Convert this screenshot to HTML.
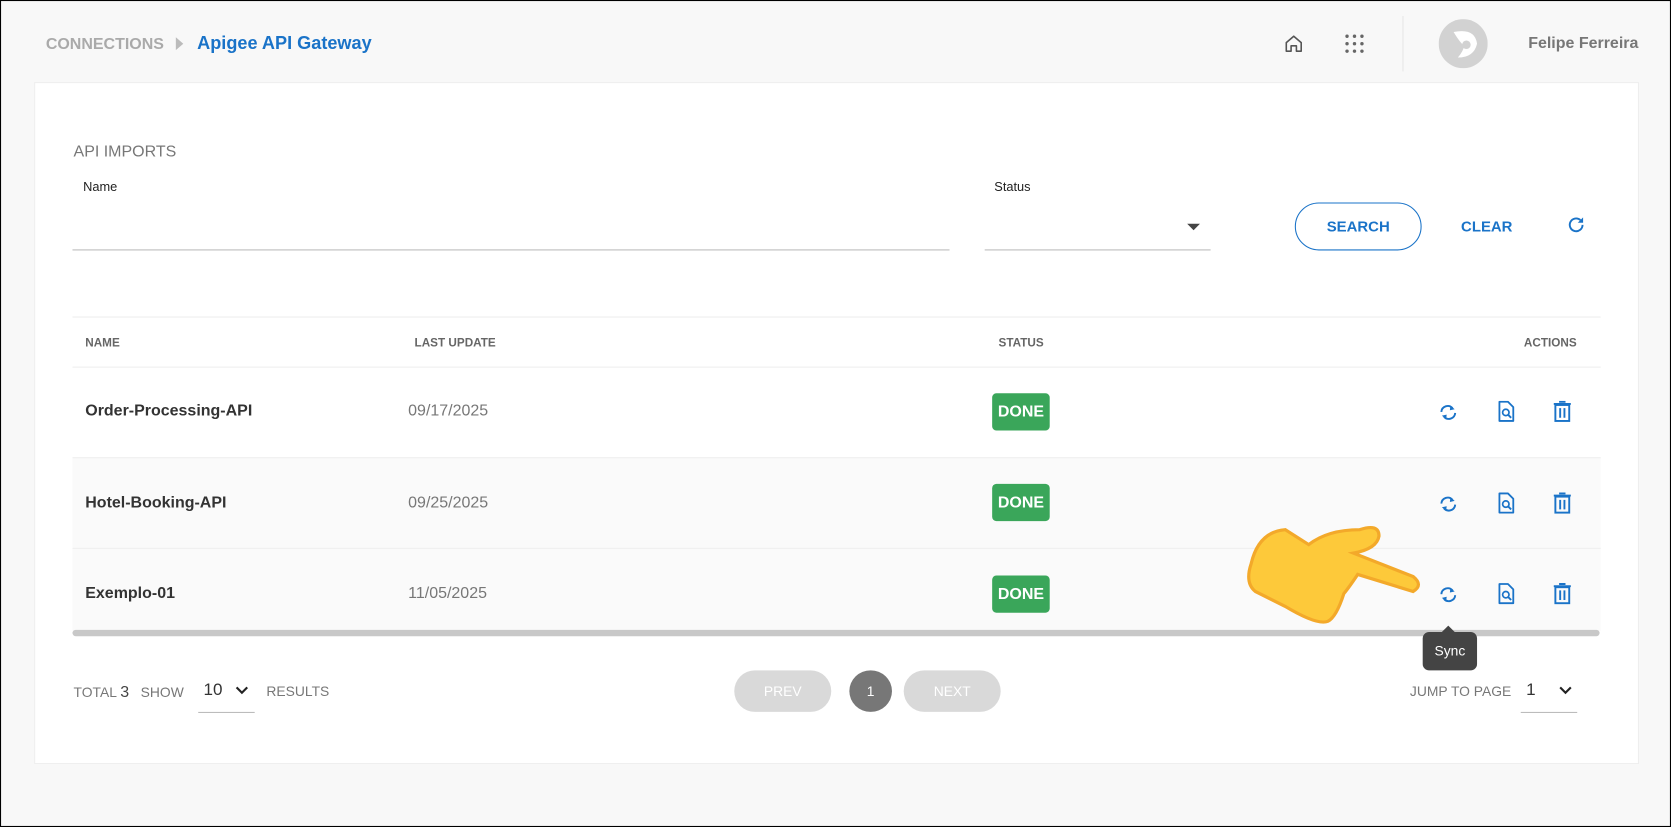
<!DOCTYPE html>
<html><head><meta charset="utf-8"><style>
*{box-sizing:border-box;margin:0;padding:0}
html,body{width:1671px;height:827px;overflow:hidden;background:#f8f8f8}
#w{position:absolute;left:0;top:0;width:1568px;height:776px;transform:scale(1.06569,1.06573);transform-origin:0 0;background:#f8f8f8;border:1px solid #000;font-family:"Liberation Sans",sans-serif}
.a{position:absolute}
.card{left:31px;top:76px;width:1506px;height:640px;background:#fff;border:1px solid #eee}
.hd{font-size:11px;font-weight:bold;color:#666}
.nm{font-size:15px;font-weight:bold;color:#333}
.dt{font-size:15px;color:#777}
.done{width:54px;height:35px;background:#3aa65a;border-radius:4px;color:#fff;font-weight:bold;font-size:15px;text-align:center;line-height:35px}
.row{left:67px;width:1434px;height:85px;border-top:1px solid #eee}
.gray{color:#777;font-size:13px}
</style></head><body><div id="w">
<div class="a" style="left:42px;top:32px;font-size:15px;font-weight:bold;color:#aaa">CONNECTIONS</div>
<div class="a" style="left:164px;top:34px;width:0;height:0;border-left:7px solid #bbb;border-top:6px solid transparent;border-bottom:6px solid transparent"></div>
<div class="a" style="left:184px;top:30px;font-size:17px;font-weight:bold;color:#1a73c8">Apigee API Gateway</div>
<svg class="a" style="left:1204px;top:31px" width="18" height="18" viewBox="0 0 18 18"><path d="M2 8L9 2l7 6v8h-4.5v-5h-5v5H2z" fill="none" stroke="#555" stroke-width="1.5" stroke-linejoin="round"/></svg>
<svg class="a" style="left:1261px;top:31px" width="18" height="18"><g fill="#666"><circle cx="2" cy="2" r="1.6"/><circle cx="9" cy="2" r="1.6"/><circle cx="16" cy="2" r="1.6"/><circle cx="2" cy="9" r="1.6"/><circle cx="9" cy="9" r="1.6"/><circle cx="16" cy="9" r="1.6"/><circle cx="2" cy="16" r="1.6"/><circle cx="9" cy="16" r="1.6"/><circle cx="16" cy="16" r="1.6"/></g></svg>
<div class="a" style="left:1315px;top:14px;width:1px;height:52px;background:#e6e6e6"></div>
<svg class="a" style="left:1349px;top:17px" width="46" height="46"><circle cx="23" cy="23" r="23" fill="#d2d2d2"/><path d="M14 12Q34 8 36 23Q33 36 18 36Q23 30 24 25Q20 22 14 12z" fill="#fff"/><circle cx="26" cy="24" r="4" fill="#d2d2d2"/></svg>
<div class="a" style="left:1433px;top:31px;font-size:15px;font-weight:bold;color:#777">Felipe Ferreira</div>
<div class="a card"></div>
<div class="a" style="left:68px;top:133px;font-size:15px;color:#777">API IMPORTS</div>
<div class="a" style="left:77px;top:167px;font-size:12px;color:#222">Name</div>
<div class="a" style="left:67px;top:233px;width:823px;height:1px;background:#bbb"></div>
<div class="a" style="left:932px;top:167px;font-size:12px;color:#222">Status</div>
<div class="a" style="left:923px;top:233px;width:212px;height:1px;background:#bbb"></div>
<div class="a" style="left:1113px;top:209px;width:0;height:0;border-top:6px solid #444;border-left:6px solid transparent;border-right:6px solid transparent"></div>
<div class="a" style="left:1214px;top:189px;width:119px;height:45px;border:1px solid #1a73c8;border-radius:23px;color:#1a73c8;font-size:14px;font-weight:bold;text-align:center;line-height:43px">SEARCH</div>
<div class="a" style="left:1370px;top:203px;color:#1a73c8;font-size:14px;font-weight:bold">CLEAR</div>
<svg class="a" style="left:1469px;top:201px" width="18" height="18" viewBox="0 0 18 18"><path d="M15 9a6 6 0 1 1-2-4.5" fill="none" stroke="#1a73c8" stroke-width="1.8"/><path d="M15.5 2v5h-5z" fill="#1a73c8"/></svg>
<div class="a" style="left:67px;top:296px;width:1434px;height:1px;background:#eee"></div>
<div class="a hd" style="left:79px;top:315px">NAME</div>
<div class="a hd" style="left:388px;top:315px">LAST UPDATE</div>
<div class="a hd" style="left:936px;top:315px">STATUS</div>
<div class="a hd" style="left:1429px;top:315px">ACTIONS</div>
<div class="a row" style="top:343px;background:#fff"></div>
<div class="a row" style="top:428px;background:#fafafa"></div>
<div class="a row" style="top:513px;background:#fafafa;height:78px"></div>
<div class="a nm" style="left:79px;top:376px">Order-Processing-API</div>
<div class="a dt" style="left:382px;top:376px">09/17/2025</div>
<div class="a done" style="left:930px;top:368px">DONE</div>
<div class="a nm" style="left:79px;top:462px">Hotel-Booking-API</div>
<div class="a dt" style="left:382px;top:462px">09/25/2025</div>
<div class="a done" style="left:930px;top:453px">DONE</div>
<div class="a nm" style="left:79px;top:547px">Exemplo-01</div>
<div class="a dt" style="left:382px;top:547px">11/05/2025</div>
<div class="a done" style="left:930px;top:539px">DONE</div>
<div class="a" style="left:67px;top:590px;width:1433px;height:6px;background:#c8c8c8;border-radius:3px"></div>
<!-- icons -->
<svg width="0" height="0" style="position:absolute"><defs>
<g id="sy"><path d="M3.5 9.5A6 6 0 0 1 14 6" fill="none" stroke="#1a73c8" stroke-width="1.8"/><path d="M12 3.5l4 3.5-4.5 1z" fill="#1a73c8"/><path d="M16.5 10.5A6 6 0 0 1 6 14" fill="none" stroke="#1a73c8" stroke-width="1.8"/><path d="M8 16.5l-4-3.5 4.5-1z" fill="#1a73c8"/></g>
<g id="dc"><path d="M2 1h8l5 5v13H2z" fill="none" stroke="#1a73c8" stroke-width="1.7" stroke-linejoin="round"/><circle cx="8" cy="11" r="3" fill="none" stroke="#1a73c8" stroke-width="1.6"/><path d="M10 13l3 3" stroke="#1a73c8" stroke-width="1.8"/></g>
<g id="tr"><path d="M1 3h16" stroke="#1a73c8" stroke-width="1.8"/><path d="M6 1h6" stroke="#1a73c8" stroke-width="1.8"/><rect x="2.5" y="4" width="13" height="15" fill="none" stroke="#1a73c8" stroke-width="1.8"/><path d="M7 7v9M11 7v9" stroke="#1a73c8" stroke-width="1.8"/></g>
</defs></svg>
<svg class="a" style="left:1348px;top:376px" width="20" height="20"><use href="#sy"/></svg>
<svg class="a" style="left:1404px;top:375px" width="18" height="21"><use href="#dc"/></svg>
<svg class="a" style="left:1456px;top:375px" width="18" height="21"><use href="#tr"/></svg>
<svg class="a" style="left:1348px;top:462px" width="20" height="20"><use href="#sy"/></svg>
<svg class="a" style="left:1404px;top:461px" width="18" height="21"><use href="#dc"/></svg>
<svg class="a" style="left:1456px;top:461px" width="18" height="21"><use href="#tr"/></svg>
<svg class="a" style="left:1348px;top:547px" width="20" height="20"><use href="#sy"/></svg>
<svg class="a" style="left:1404px;top:546px" width="18" height="21"><use href="#dc"/></svg>
<svg class="a" style="left:1456px;top:546px" width="18" height="21"><use href="#tr"/></svg>
<!-- hand -->
<svg class="a" style="left:1165px;top:488px" width="170" height="100" viewBox="0 0 170 100"><path d="M8 40Q15 10 40 8L62 22Q80 8 110 8Q128 2 128 14Q126 26 104 30L160 52Q170 60 160 66L108 50Q100 62 95 68Q88 90 80 94Q70 98 40 80L12 66Q2 58 8 40z" fill="#fdc93a" stroke="#f3a92a" stroke-width="3"/></svg>
<!-- tooltip -->
<div class="a" style="left:1351px;top:586px;width:0;height:0;border-bottom:7px solid #444;border-left:7px solid transparent;border-right:7px solid transparent"></div>
<div class="a" style="left:1334px;top:592px;width:51px;height:36px;background:#444;border-radius:6px;color:#fff;font-size:13px;text-align:center;line-height:36px">Sync</div>
<!-- footer -->
<div class="a gray" style="left:68px;top:640px">TOTAL <span style="font-size:15px;color:#444">3</span>&nbsp;&nbsp; SHOW</div>
<div class="a" style="left:190px;top:638px;font-size:16px;color:#333">10</div>
<svg class="a" style="left:220px;top:643px" width="12" height="8"><path d="M1 1l5 5 5-5" fill="none" stroke="#222" stroke-width="2"/></svg>
<div class="a" style="left:185px;top:667px;width:53px;height:1px;background:#bbb"></div>
<div class="a gray" style="left:249px;top:640px">RESULTS</div>
<div class="a" style="left:688px;top:628px;width:91px;height:39px;background:#d9d9d9;border-radius:20px;color:#fff;font-size:13px;text-align:center;line-height:39px">PREV</div>
<div class="a" style="left:796px;top:628px;width:40px;height:39px;background:#777;border-radius:50%;color:#fff;font-size:13px;text-align:center;line-height:39px">1</div>
<div class="a" style="left:847px;top:628px;width:91px;height:39px;background:#d9d9d9;border-radius:20px;color:#fff;font-size:13px;text-align:center;line-height:39px">NEXT</div>
<div class="a gray" style="left:1322px;top:640px">JUMP TO PAGE</div>
<div class="a" style="left:1431px;top:638px;font-size:16px;color:#333">1</div>
<svg class="a" style="left:1462px;top:643px" width="12" height="8"><path d="M1 1l5 5 5-5" fill="none" stroke="#222" stroke-width="2"/></svg>
<div class="a" style="left:1426px;top:667px;width:53px;height:1px;background:#bbb"></div>
</div></body></html>
